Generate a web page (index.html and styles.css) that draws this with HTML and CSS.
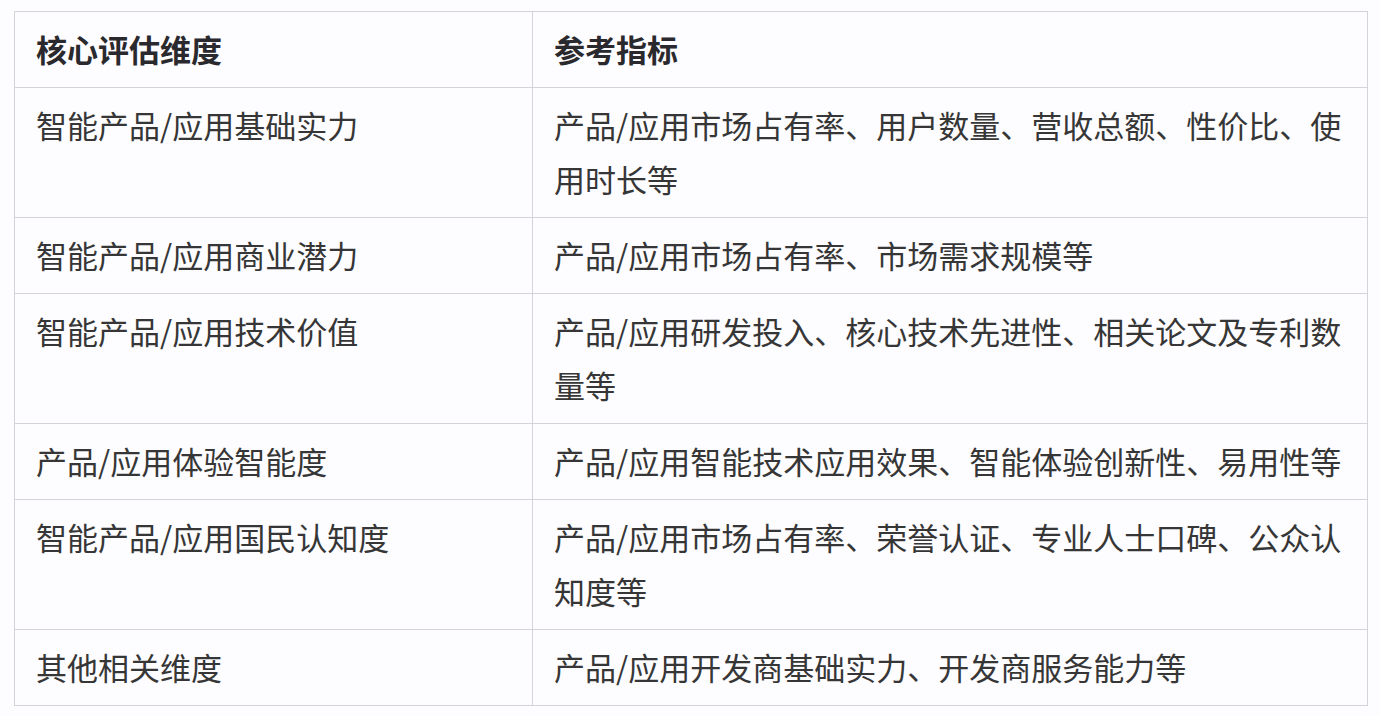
FILE: index.html
```html
<!DOCTYPE html>
<html lang="zh-CN">
<head>
<meta charset="utf-8">
<title>核心评估维度</title>
<link rel="stylesheet" href="styles.css">
</head>
<body>
<table class="eval-table">
  <colgroup>
    <col class="col-dim">
    <col class="col-ref">
  </colgroup>
  <thead>
    <tr>
      <th>核心评估维度</th>
      <th>参考指标</th>
    </tr>
  </thead>
  <tbody>
    <tr>
      <td>智能产品/应用基础实力</td>
      <td>产品/应用市场占有率、用户数量、营收总额、性价比、使用时长等</td>
    </tr>
    <tr>
      <td>智能产品/应用商业潜力</td>
      <td>产品/应用市场占有率、市场需求规模等</td>
    </tr>
    <tr>
      <td>智能产品/应用技术价值</td>
      <td>产品/应用研发投入、核心技术先进性、相关论文及专利数量等</td>
    </tr>
    <tr>
      <td>产品/应用体验智能度</td>
      <td>产品/应用智能技术应用效果、智能体验创新性、易用性等</td>
    </tr>
    <tr>
      <td>智能产品/应用国民认知度</td>
      <td>产品/应用市场占有率、荣誉认证、专业人士口碑、公众认知度等</td>
    </tr>
    <tr>
      <td>其他相关维度</td>
      <td>产品/应用开发商基础实力、开发商服务能力等</td>
    </tr>
  </tbody>
</table>
</body>
</html>
```

FILE: styles.css
```css
html, body {
  background: #fdfcfe;
}
body {
  margin: 11px 0 0 14px;
  font-family: "Noto Sans CJK SC", "Noto Sans", sans-serif;
  color: #363636;
}
.eval-table {
  border-collapse: collapse;
  table-layout: fixed;
  width: 1353px;
  background: #fdfcfe;
}
.col-dim {
  width: 518px;
}
.col-ref {
  width: 835px;
}
.eval-table th,
.eval-table td {
  border: 1px solid #d4d3d8;
  padding: 10px 19px 11px 21px;
  font-size: 31px;
  line-height: 54px;
  text-align: left;
  vertical-align: top;
  word-break: break-all;
}
.eval-table th {
  font-weight: bold;
  color: #2a2a2e;
}
```
